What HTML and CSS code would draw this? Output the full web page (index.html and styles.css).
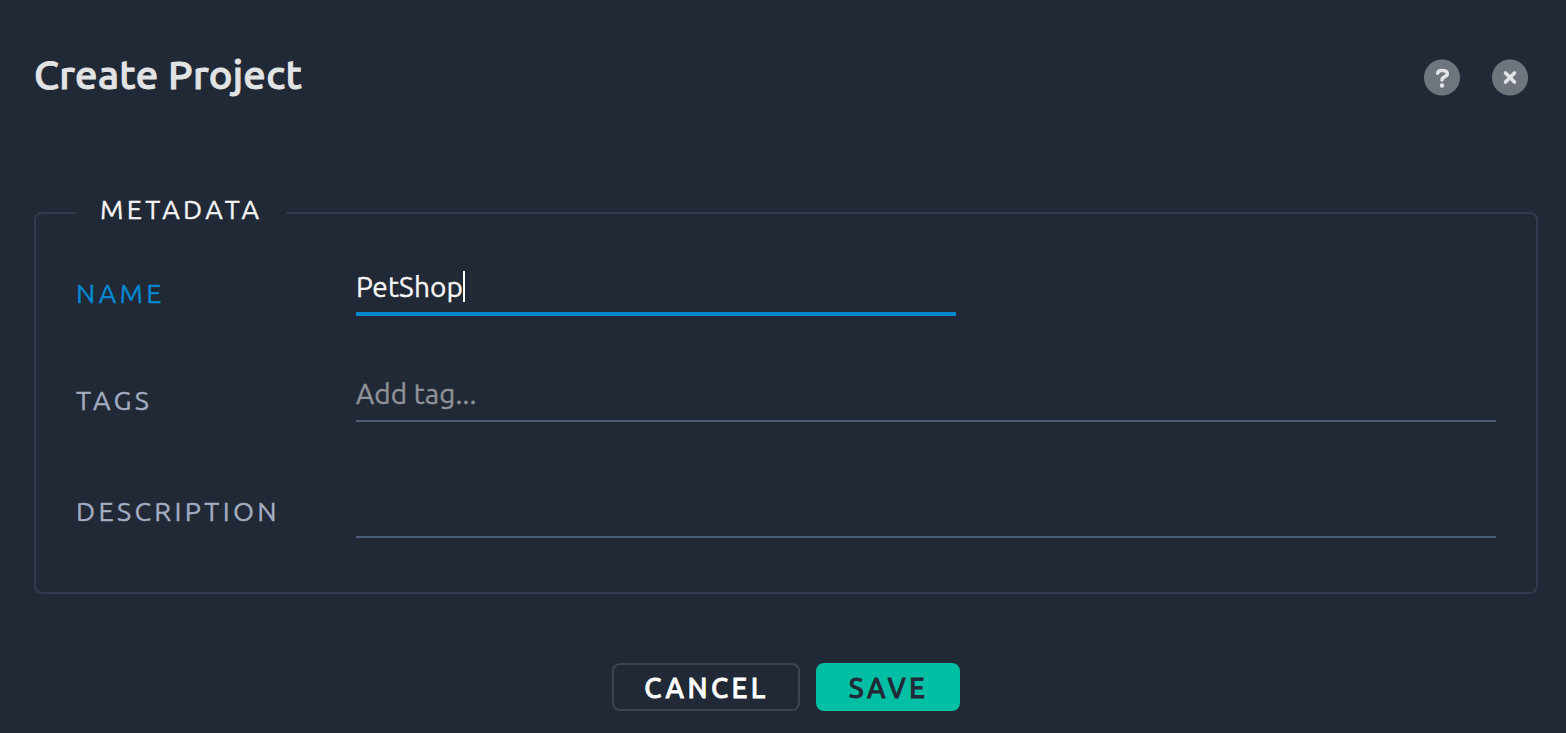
FILE: index.html
```html
<!DOCTYPE html>
<html lang="en">
<head>
    <meta charset="utf-8">
    <title>Create Project</title>
    <link rel="stylesheet" href="styles.css">
</head>
<body>

<form class="dialog">
    <!-- Title and icon buttons -->
    <header class="dialog-header">
        <h1 class="dialog-title">Create Project</h1>
        <div class="dialog-icons">
            <svg class="icon" viewBox="0 -0.5 36 37">
                <circle cx="18" cy="18" r="18" />
                <path d="M13.7 13.8 C13.7 11.8 15 11 18 11 C21.4 11 23.3 11.8 23.3 14.2 C23.3 17.3 18 17.3 18 20.4" />
                <circle class="icon-dot" cx="18" cy="26" r="2.2" />
            </svg>
            <svg class="icon" viewBox="0 -0.5 36 37">
                <circle cx="18" cy="18" r="18" />
                <path d="M13.5 13.5 L22.5 22.5 M22.5 13.5 L13.5 22.5" />
            </svg>
        </div>
    </header>

    <!-- Project metadata -->
    <fieldset class="metadata">
        <legend class="metadata-legend">METADATA</legend>
        <div class="row row-name">
            <span class="label">NAME</span>
            <div class="field"><span class="name-text">PetShop</span><span class="caret"></span></div>
        </div>
        <div class="row row-tags">
            <span class="label">TAGS</span>
            <div class="field"><span class="placeholder">Add tag...</span></div>
        </div>
        <div class="row row-description">
            <span class="label">DESCRIPTION</span>
            <div class="field"></div>
        </div>
    </fieldset>

    <footer class="dialog-footer">
        <button type="button" class="button cancel">CANCEL</button>
        <button type="button" class="button save">SAVE</button>
    </footer>
</form>

</body>
</html>
```
FILE: styles.css
```css
* {
    box-sizing: border-box;
}

body {
    margin: 0;
    background-color: #222936;
    color: #f5f5f5;
    font-family: Ubuntu, "Noto Sans", sans-serif;
    font-size: 28px;
    line-height: 31px;
    -webkit-text-stroke: 0.35px currentColor;
}

.dialog {
    height: 733px;
    padding: 50px 28px 0 34px;
}

.dialog-header {
    display: flex;
    justify-content: space-between;
    height: 48px;
    padding-right: 10px;
}

.dialog-title {
    margin: 0;
    color: #e1e3e4;
    font-size: 40px;
    font-weight: 500;
    line-height: 49px;
    letter-spacing: 0.3px;
    white-space: nowrap;
    -webkit-text-stroke: 1px #e1e3e4;
}

.dialog-icons {
    display: flex;
    gap: 32px;
    padding-top: 9px;
}

.icon {
    width: 36px;
    height: 37px;
    fill: #6e757c;
}

.icon path {
    fill: none;
    stroke: #e1e3e4;
    stroke-width: 3.6;
    stroke-linecap: round;
}

.icon .icon-dot {
    fill: #e1e3e4;
}

.metadata {
    height: 401px;
    margin: 95px 0 0;
    padding: 0 40px;
    border: 2px solid #303c4d;
    border-radius: 8px;
}

.metadata-legend {
    width: 210px;
    height: 40px;
    padding: 0 24px;
    font-size: 27px;
    line-height: 32px;
    letter-spacing: 3.35px;
}

.row {
    display: grid;
    grid-template-columns: 280px 1fr;
    align-items: end;
}

.row-name {
    height: 83px;
}

.row-tags {
    height: 106px;
}

.row-description {
    height: 116px;
}

.label {
    padding-bottom: 7px;
    color: #a3adc2;
    font-size: 27px;
    line-height: 32px;
    letter-spacing: 3.35px;
}

.row-tags .label {
    padding-bottom: 6px;
}

.row-description .label {
    padding-bottom: 11px;
}

.row-name .label {
    color: #0288d1;
}

.field {
    display: flex;
    height: 44px;
    border-bottom: 2px solid #4b5c76;
}

.row-name .field {
    width: 600px;
    height: 45px;
    border-bottom: 4px solid #0288d1;
}

.name-text {
    letter-spacing: 0.15px;
}

.caret {
    width: 2px;
    height: 31px;
    background-color: #ffffff;
}

.placeholder {
    color: #919398;
    letter-spacing: 0.1px;
}

.dialog-footer {
    display: flex;
    justify-content: center;
    gap: 16px;
    padding-top: 69px;
}

.button {
    height: 48px;
    padding: 2px 0 0 1px;
    border: 2px solid #3c4351;
    border-radius: 8px;
    background-color: transparent;
    color: #ffffff;
    font: 500 27.5px/32px Ubuntu, "Noto Sans", sans-serif;
    letter-spacing: 3.4px;
    -webkit-text-stroke: 0.8px currentColor;
}

.cancel {
    width: 188px;
}

.save {
    width: 144px;
    border-color: #00bfa5;
    background-color: #00bfa5;
    color: #222936;
}
```
